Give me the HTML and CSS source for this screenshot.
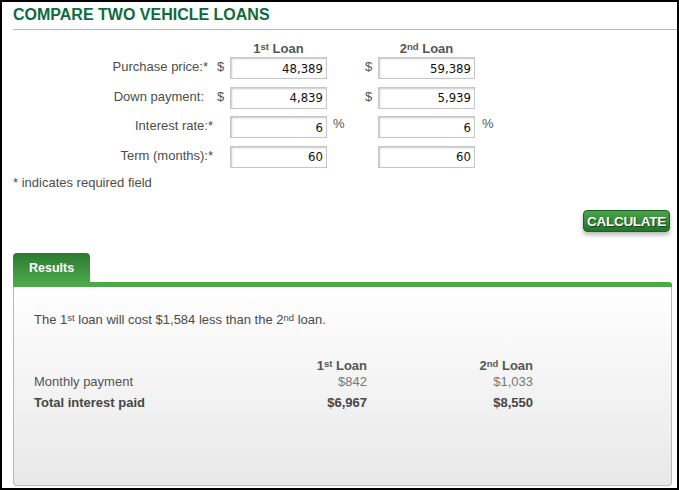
FILE: index.html
```html
<!DOCTYPE html>
<html>
<head>
<meta charset="utf-8">
<link rel="stylesheet" href="styles.css">
</head>
<body>
<div class="frame">
  <h1 class="title">COMPARE TWO VEHICLE LOANS</h1>

  <div class="grid heads">
    <div class="head c3">1<sup>st</sup> Loan</div>
    <div class="head c6">2<sup>nd</sup> Loan</div>
  </div>

  <div class="grid form">
    <div class="label">Purchase price:*</div>
    <div class="cur">$</div>
    <input class="field c3" type="text" value="48,389">
    <div class="cur cur2 c5">$</div>
    <input class="field c6" type="text" value="59,389">

    <div class="label pad">Down payment:</div>
    <div class="cur">$</div>
    <input class="field c3" type="text" value="4,839">
    <div class="cur cur2 c5">$</div>
    <input class="field c6" type="text" value="5,939">

    <div class="label wide">Interest rate:*</div>
    <input class="field c3" type="text" value="6">
    <div class="pct c4">%</div>
    <input class="field c6" type="text" value="6">
    <div class="pct pct2 c7">%</div>

    <div class="label wide">Term (months):*</div>
    <input class="field c3" type="text" value="60">
    <input class="field c6" type="text" value="60">
  </div>

  <p class="note">* indicates required field</p>

  <div class="actions">
    <button class="calc" type="button">CALCULATE</button>
  </div>

  <div class="results">
    <div class="tab">Results</div>
    <div class="bar"></div>
    <div class="panel">
      <p class="summary">The 1<sup>st</sup> loan will cost $1,584 less than the 2<sup>nd</sup> loan.</p>
      <div class="table">
        <div></div>
        <div class="th">1<sup>st</sup> Loan</div>
        <div class="th">2<sup>nd</sup> Loan</div>

        <div class="rl">Monthly payment</div>
        <div class="rv">$842</div>
        <div class="rv">$1,033</div>

        <div class="rl total">Total interest paid</div>
        <div class="rv total">$6,967</div>
        <div class="rv total">$8,550</div>
      </div>
    </div>
  </div>
</div>
</body>
</html>
```

FILE: styles.css
```css
html, body {
  margin: 0;
  padding: 0;
  background: #fff;
}

.frame {
  width: 679px;
  height: 490px;
  box-sizing: border-box;
  border: 2px solid #000;
  background: #fff;
  font-family: "Liberation Sans", Arial, sans-serif;
  font-size: 13px;
  color: #4a4a4a;
  display: flex;
  flex-direction: column;
}

.title {
  margin: 3px 0 0 11px;
  padding: 0 0 4px 0;
  border-bottom: 1px solid #b8b8b8;
  font-size: 16px;
  line-height: 20px;
  font-weight: 700;
  color: #0e6b3b;
}

.grid {
  display: grid;
  grid-template-columns: 206px 22px 97px 38px 13px 97px 1fr;
}

.heads {
  margin-top: 11px;
}

.head {
  font-weight: 700;
  font-size: 13px;
  line-height: 15px;
  color: #555;
  text-align: center;
}

.c3 { grid-column: 3; }
.c4 { grid-column: 4; }
.c5 { grid-column: 5; }
.c6 { grid-column: 6; }
.c7 { grid-column: 7; }

sup {
  font-size: 9.5px;
  line-height: 0;
  vertical-align: 3.5px;
}

.form {
  margin-top: 1px;
  row-gap: 7.5px;
}

.label {
  grid-column: 1;
  align-self: start;
  line-height: 19px;
  text-align: right;
  color: #4d4d4d;
}

.label.pad {
  padding-right: 4px;
}

.label.wide {
  grid-column: 1 / span 2;
  padding-right: 17px;
}

.cur {
  grid-column: 2;
  align-self: start;
  line-height: 19px;
  padding-left: 9px;
  color: #555;
}

.cur.cur2 {
  grid-column: 5;
  padding-left: 0;
}

.field {
  width: 97px;
  height: 22px;
  box-sizing: border-box;
  margin: 0;
  border: 1px solid #c6c6c6;
  box-shadow: inset 1px 1px 2px rgba(0, 0, 0, 0.22);
  background: #fff;
  padding: 0 3px 0 0;
  text-align: right;
  font-family: "DejaVu Sans Condensed", "Liberation Sans", sans-serif;
  font-size: 13px;
  color: #111;
  outline: none;
}

.pct {
  align-self: start;
  margin-top: 0;
  line-height: 16px;
  padding-left: 6px;
  color: #555;
}

.pct.pct2 {
  padding-left: 7px;
}

.note {
  margin: 7.5px 0 0 11px;
  line-height: 15px;
  color: #4d4d4d;
}

.actions {
  display: flex;
  justify-content: flex-end;
  margin: 20px 7px 0 0;
}

.calc {
  width: 87px;
  height: 22px;
  margin: 0;
  padding: 0;
  border: 1px solid #1e5f26;
  border-radius: 4px;
  background: linear-gradient(#4aa34a, #22752b);
  box-shadow: 0 3px 4px rgba(0, 0, 0, 0.28);
  color: #fff;
  font-family: "Liberation Sans", Arial, sans-serif;
  font-weight: 700;
  font-size: 13.5px;
  letter-spacing: -0.3px;
  text-shadow: 1px 1px 1px rgba(0, 0, 0, 0.55);
}

.results {
  flex: 1;
  display: flex;
  flex-direction: column;
  margin: 21px 5px 2px 11px;
}

.tab {
  width: 77px;
  height: 29px;
  box-sizing: border-box;
  padding-left: 16px;
  border-radius: 4px 4px 0 0;
  background: linear-gradient(#2c7a31, #4aa649);
  color: #fff;
  font-weight: 700;
  font-size: 12.5px;
  line-height: 30px;
}

.bar {
  height: 5px;
  background: #4da84a;
  border-top-right-radius: 3px;
}

.panel {
  flex: 1;
  border: 1px solid #b9b9b9;
  border-top: none;
  border-radius: 0 0 4px 4px;
  background: linear-gradient(#ffffff, #e8e8e8);
  padding: 25px 20px 0 20px;
}

.summary {
  margin: 0;
  line-height: 15px;
  color: #4a4a4a;
}

.table {
  display: grid;
  grid-template-columns: 200px 133px 166px;
  margin-top: 31px;
}

.th {
  text-align: right;
  font-weight: 700;
  color: #555;
  line-height: 15.5px;
}

.rl {
  line-height: 15px;
  color: #555;
}

.rv {
  text-align: right;
  line-height: 15px;
  color: #777;
}

.total {
  margin-top: 6px;
  font-weight: 700;
  color: #464646;
}
```
